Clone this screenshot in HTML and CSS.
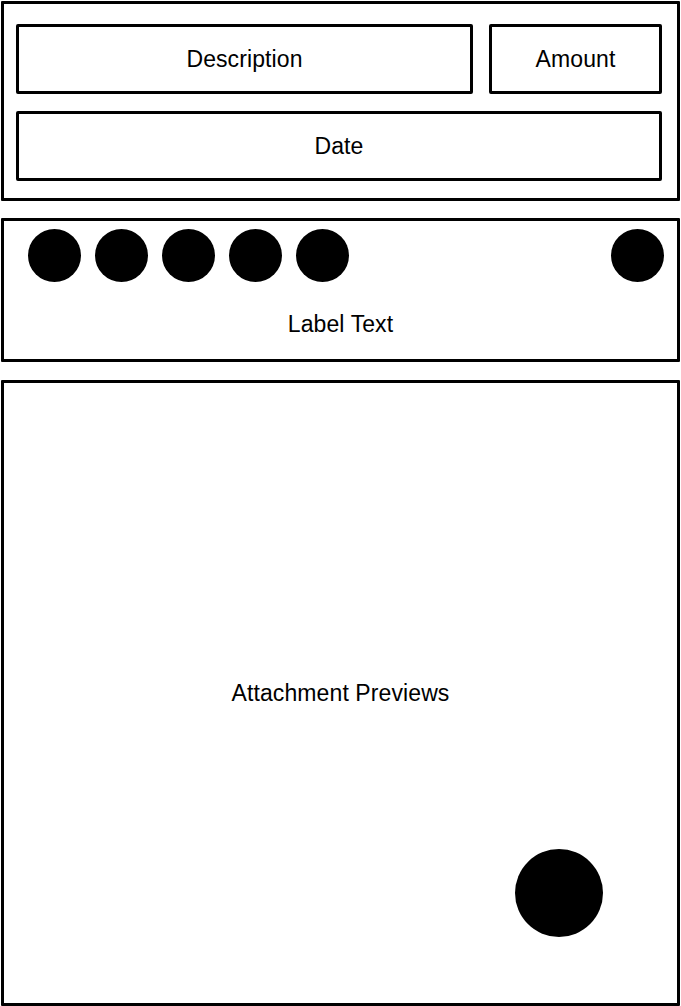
FILE: index.html
```html
<!DOCTYPE html>
<html>
<head>
<meta charset="utf-8">
<link rel="stylesheet" href="styles.css">
</head>
<body>
<div class="page">
  <section class="panel panel-fields">
    <div class="field-row">
      <div class="field field-desc">Description</div>
      <div class="field field-amount">Amount</div>
    </div>
    <div class="field field-date">Date</div>
  </section>
  <section class="panel panel-labels">
    <div class="dot-row">
      <span class="dot"></span>
      <span class="dot"></span>
      <span class="dot"></span>
      <span class="dot"></span>
      <span class="dot"></span>
      <span class="spacer"></span>
      <span class="dot"></span>
    </div>
    <div class="label-text">Label Text</div>
  </section>
  <section class="panel panel-attach">
    <div class="attach-text">Attachment Previews</div>
    <span class="fab"></span>
  </section>
</div>
</body>
</html>
```
FILE: styles.css
```css
* { box-sizing: border-box; }
html, body { margin: 0; padding: 0; background: #fff; }
body {
  padding: 1px;
  font-family: "Liberation Sans", Arial, sans-serif;
  color: #000;
}
.page {
  display: flex;
  flex-direction: column;
  width: 679px;
}
.panel {
  border: 3px solid #000;
  border-radius: 1px;
}
.panel-fields {
  height: 200px;
  padding: 20px 15px 0 12px;
  display: flex;
  flex-direction: column;
  gap: 17px;
}
.field-row {
  display: flex;
  gap: 16px;
}
.field {
  height: 70px;
  border: 3px solid #000;
  border-radius: 2px;
  display: flex;
  align-items: center;
  justify-content: center;
  font-size: 23px;
  letter-spacing: 0.1px;
}
.field-desc { width: 457px; }
.field-amount { width: 173px; }
.field-date { width: 646px; }
.panel-labels {
  margin-top: 17px;
  height: 144px;
  padding: 8px 13px 0 24px;
  display: flex;
  flex-direction: column;
}
.dot-row {
  display: flex;
  gap: 14px;
}
.dot {
  width: 53px;
  height: 53px;
  border-radius: 50%;
  background: #000;
  flex: none;
}
.spacer { flex: 1; }
.label-text {
  margin-top: 30px;
  margin-left: -11px;
  text-align: center;
  font-size: 23px;
  line-height: 24px;
  letter-spacing: 0.1px;
}
.panel-attach {
  margin-top: 18px;
  height: 626px;
  position: relative;
  display: flex;
  align-items: center;
  justify-content: center;
}
.attach-text {
  font-size: 23px;
  line-height: 24px;
  letter-spacing: 0.1px;
}
.fab {
  position: absolute;
  right: 74px;
  bottom: 66px;
  width: 88px;
  height: 88px;
  border-radius: 50%;
  background: #000;
}
```
